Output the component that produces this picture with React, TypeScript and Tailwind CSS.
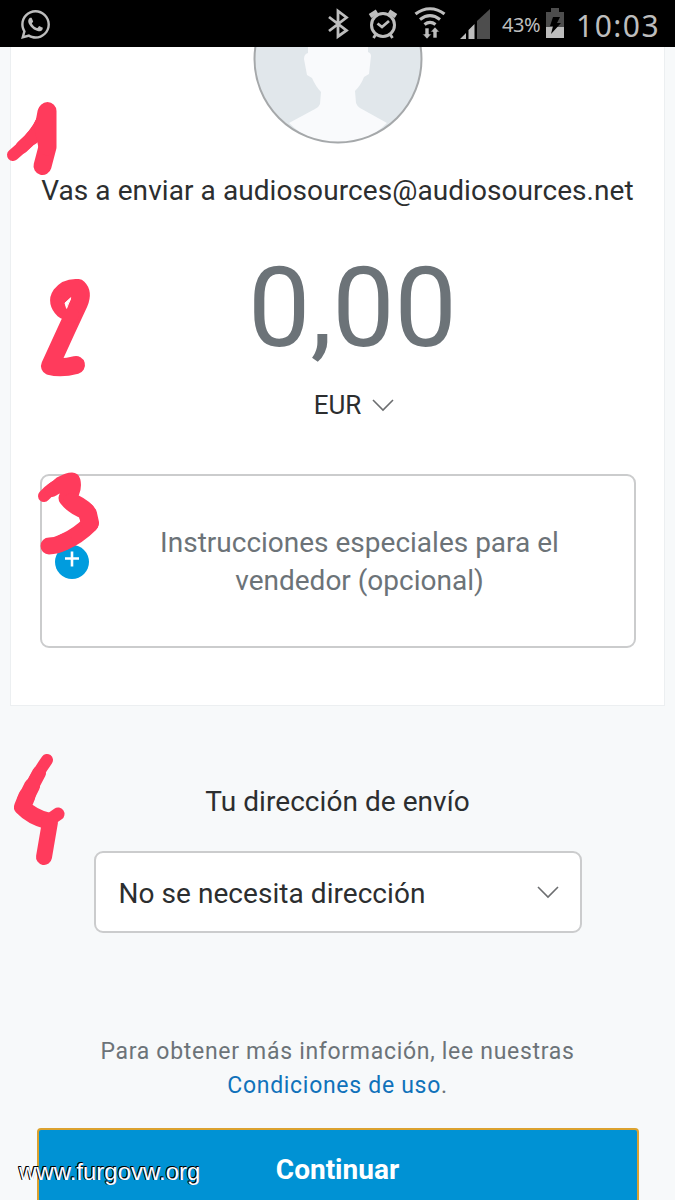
import { FaWhatsapp } from "react-icons/fa";

export default function App() {
  return (
    <div className="relative flex h-[1200px] w-[675px] flex-col overflow-hidden bg-[#f7f9fa] font-['Roboto',sans-serif] text-[#2c2e2f]">
      <StatusBar />
      <main className="flex flex-1 flex-col">
        <PaymentCard />
        <ShippingAddress />
        <Footer />
      </main>
      <MarkerNotes />
      <span className="absolute left-[19px] top-[1158px] whitespace-nowrap font-['Liberation_Sans',sans-serif] text-[24px] leading-[28px] text-white [text-shadow:-1px_-1px_0_#000,-1px_0_0_#000,0_-1px_0_#000]">
        www.furgovw.org
      </span>
    </div>
  );
}

function StatusBar() {
  return (
    <header className="flex h-[47px] shrink-0 items-center bg-black pl-[19px] pr-[16px] text-[#bdbdbd]">
      <FaWhatsapp className="mt-px size-[33px]" />
      <div className="ml-auto flex items-center">
        <svg className="h-[47px] w-[172px]" viewBox="320 0 172 47" fill="none">
          <g stroke="currentColor" strokeWidth="2.8">
            <path d="M329 17l17.500 13.500-8.500 6V11l8.500 6.500L329 31" />
            <circle cx="383" cy="25" r="11.500" strokeWidth="3" />
            <path d="M377.500 23.500l4.500 3.500 7-6" />
            <path d="M376 34l-2.500 4M390 34l2.500 4" />
            <path d="M370 16l7-4.500M389 11.500l7 4.500" strokeWidth="4.500" />
            <path d="M415.500 14c9-7 20-7 29 0M420 19.500c6.500-5 13.500-5 20 0M424.500 24.500c3.500-2.700 7.500-2.700 11 0" strokeWidth="3.200" />
          </g>
          <path
            d="M425 28h4v6h2.500l-4.500 5-4.500-5h2.500zM433 38h4v-6h2.500l-4.500-5-4.500 5h2.500z"
            fill="currentColor"
            stroke="#000"
            strokeWidth="0.6"
          />
          <path d="M460 39l6-6v6zM468.500 39v-9l6-6v15z" fill="currentColor" />
          <path d="M477 39V21l13-12v30z" fill="#4d4d4d" />
        </svg>
        <span className="ml-[10px] mt-[3px] w-[40px] whitespace-nowrap font-['Noto_Sans',sans-serif] text-[20px] tracking-[-0.5px]">
          43%
        </span>
        <svg className="ml-[3px] h-[47px] w-[20px]" viewBox="0 0 20 47">
          <path d="M1 12h5V8h8v4h5v15H1z" fill="#4d4d4d" />
          <path d="M1 27h18v11H1z" fill="currentColor" />
          <path d="M8 17h7l-3 6h4L6 34l2-8H5z" fill="#000" />
        </svg>
        <span className="ml-[11px] mt-[3px] w-[83px] whitespace-nowrap font-['Noto_Sans',sans-serif] text-[30px] tracking-[1.5px]">
          10:03
        </span>
      </div>
    </header>
  );
}

function PaymentCard() {
  return (
    <section className="mx-[10px] flex h-[659px] shrink-0 flex-col items-center border-x border-b border-[#eceff1] bg-white">
      <Avatar />
      <p className="mt-[30px] whitespace-nowrap text-[28px] leading-[34px] tracking-[0.08px]">
        Vas a enviar a audiosources@audiosources.net
      </p>
      <p className="ml-[30px] mt-[34px] whitespace-nowrap text-[111px] leading-[132px] text-[#6c7378]">
        0,00
      </p>
      <div className="ml-[33px] mt-[14px] flex items-center gap-[11px]">
        <span className="text-[26px] leading-[34px]">EUR</span>
        <Chevron />
      </div>
      <div className="mt-[52px] flex h-[174px] w-[596px] items-center rounded-[9px] border-2 border-[#cbcccd] bg-white pl-[13px]">
        <PlusBadge />
        <p className="ml-[45px] w-[452px] pt-[2px] text-center text-[28px] leading-[38px] text-[#6c7378]">
          Instrucciones especiales para el
          <br />
          vendedor (opcional)
        </p>
      </div>
    </section>
  );
}

function Avatar() {
  return (
    <svg className="h-[97px] w-[170px]" viewBox="253 47 170 97">
      <circle cx="338" cy="59" r="83.500" fill="#e1e7eb" />
      <path
        d="M308 47v6q-4 1-4 6l3 16 5 3q4 9 9 14l-1 12q-1 3-5 5l-26 14q21 21 49 21t49-21l-27-15q-3-2-4-5l-1-12q6-6 9-14l5-3 2-18q0-3-3-4v-5z"
        fill="#f9fafc"
      />
      <circle cx="338" cy="59" r="83.500" fill="none" stroke="#a5a8aa" strokeWidth="2" />
    </svg>
  );
}

function PlusBadge() {
  return (
    <svg className="mt-px size-[34px] shrink-0" viewBox="0 0 34 34">
      <circle cx="17" cy="17" r="17" fill="#009cde" />
      <path d="M10 13.500h14M17 6.500v15" stroke="#fff" strokeWidth="2.600" />
    </svg>
  );
}

function Chevron() {
  return (
    <svg className="h-[14px] w-[22px]" viewBox="0 0 22 14" fill="none">
      <path d="M1 2l10 10L21 2" stroke="#6c6e70" strokeWidth="1.600" />
    </svg>
  );
}

function ShippingAddress() {
  return (
    <section className="flex flex-col items-center pt-[79px]">
      <h2 className="whitespace-nowrap text-[28px] leading-[34px] tracking-[0.05px]">
        Tu dirección de envío
      </h2>
      <div className="mt-[32px] flex h-[82px] w-[488px] items-center justify-between rounded-[9px] border-2 border-[#cbcccd] bg-white pl-[23px] pr-[21px]">
        <span className="whitespace-nowrap pt-[3px] text-[28px] leading-[36px] tracking-[0.05px]">
          No se necesita dirección
        </span>
        <Chevron />
      </div>
    </section>
  );
}

function Footer() {
  return (
    <footer className="flex flex-1 flex-col items-center pt-[102px]">
      <p className="whitespace-nowrap text-center text-[23px] leading-[34px] tracking-[0.7px] text-[#6c7378]">
        Para obtener más información, lee nuestras
        <br />
        <span className="text-[#1072ba]">Condiciones de uso</span>.
      </p>
      <button className="mt-[25px] h-[84px] w-[602px] shrink-0 rounded-t-[4px] border-2 border-[#dba22f] bg-[#0092d4] text-[28px] font-bold text-white">
        Continuar
      </button>
    </footer>
  );
}

/* Red marker strokes numbering the steps of the form */
function MarkerNotes() {
  return (
    <svg
      className="pointer-events-none absolute left-0 top-0 h-[1200px] w-[675px]"
      viewBox="0 0 675 1200"
      fill="none"
      stroke="#ff3b5c"
      strokeLinecap="round"
      strokeLinejoin="round"
    >
      <path d="M13 155L29 141Q38 133 43 120" strokeWidth="12" />
      <path d="M22 147Q36 135 42 122" strokeWidth="13" />
      <path d="M32 138Q40 130 47 112" strokeWidth="14" />
      <path d="M47.500 111L47.500 147L42.500 166" strokeWidth="18" />
      <path d="M46 112L43 128L47 147" strokeWidth="17" />

      <path d="M64 310Q56 302 61 295Q67 287 78 288Q83 293 79 303L66 331L50 366Q61 369 76 365" strokeWidth="18" />
      <path d="M60 304Q66 313 71 315" strokeWidth="16" />
      <path d="M70.500 298L65 303L66.500 308Z" fill="#fff" stroke="#fff" strokeWidth="1" />

      <path d="M44 496Q53 486 65 482" strokeWidth="12" />
      <path d="M52 490Q60 484 70 481" strokeWidth="14" />
      <path d="M61 485Q68 481 72 481Q74 490 67 498Q74 507 86 511L90 524Q78 536 64 542" strokeWidth="17" />
      <path d="M72 502Q86 509 88 514L90 523" strokeWidth="18" />
      <path d="M64 542Q56 546 49 546" strokeWidth="17" />

      <path d="M47 760Q37 774 27 794" strokeWidth="12" />
      <path d="M39 773Q32 786 25 800" strokeWidth="14" />
      <path d="M32 786L25 800" strokeWidth="16" />
      <path d="M27 796L22.500 807Q32 817 48 821" strokeWidth="17" />
      <path d="M48 821L58 814" strokeWidth="13" />
      <path d="M50 822L44 857" strokeWidth="16" />
    </svg>
  );
}
